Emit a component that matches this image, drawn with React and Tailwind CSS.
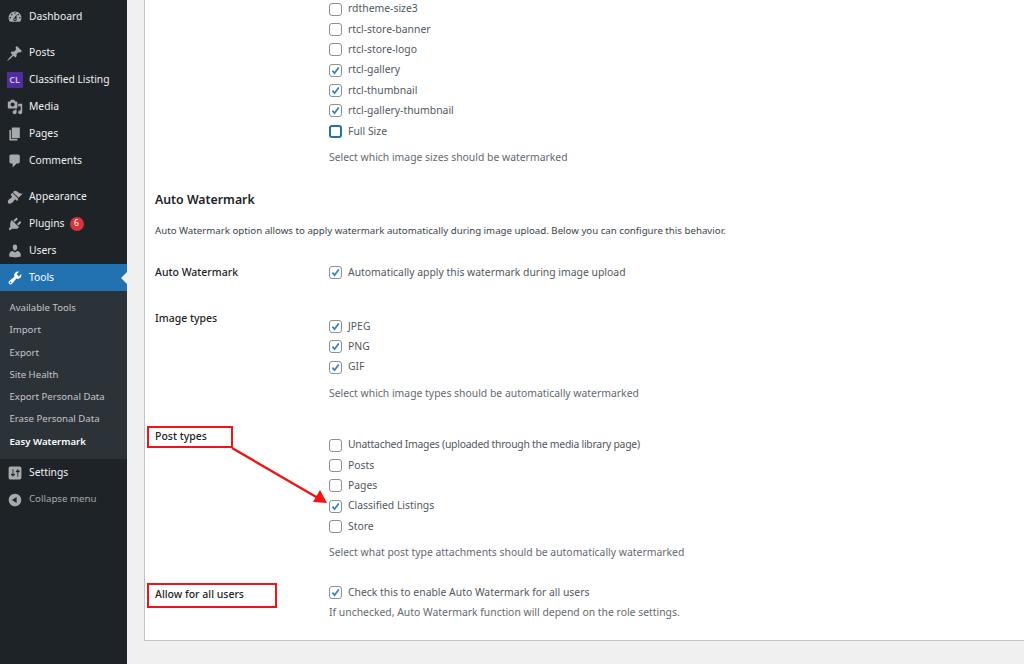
import React from 'react';

// dashicons, redrawn inline since the icon packages do not carry them
const ICONS = {
    dashboard: 'M3.76 16h12.48c1.1-1.37 1.76-3.11 1.76-5 0-4.42-3.58-8-8-8s-8 3.58-8 8c0 1.89.66 3.63 1.76 5zM10 4c.55 0 1 .45 1 1s-.45 1-1 1-1-.45-1-1 .45-1 1-1zM6 6c.55 0 1 .45 1 1s-.45 1-1 1-1-.45-1-1 .45-1 1-1zm8 0c.55 0 1 .45 1 1s-.45 1-1 1-1-.45-1-1 .45-1 1-1zm-5.37 5.55L12 7v6c0 1.1-.9 2-2 2s-2-.9-2-2c0-.57.24-1.08.63-1.45zM4 10c.55 0 1 .45 1 1s-.45 1-1 1-1-.45-1-1 .45-1 1-1zm12 0c.55 0 1 .45 1 1s-.45 1-1 1-1-.45-1-1 .45-1 1-1zm-5 3c0-.55-.45-1-1-1s-1 .45-1 1 .45 1 1 1 1-.45 1-1z',
    post: 'M10.44 3.02l1.82-1.82 6.36 6.35-1.83 1.82c-1.05-.68-2.48-.57-3.41.36l-.75.75c-.92.93-1.04 2.35-.35 3.41l-1.83 1.82-2.41-2.41-2.89 2.89c-1.95 1.95-5.3 4.09-5.3 4.09s2.1-3.29 4.08-5.3l2.89-2.89-2.4-2.4 1.82-1.83c1.06.69 2.48.57 3.41-.36l.75-.75c.93-.92 1.04-2.35.36-3.41z',
    media: 'M13 11V4c0-.55-.45-1-1-1h-1.67L9 1H5L3.67 3H2c-.55 0-1 .45-1 1v7c0 .55.45 1 1 1h10c.55 0 1-.45 1-1zM7 4.5c1.38 0 2.5 1.12 2.5 2.5S8.38 9.5 7 9.5 4.5 8.38 4.5 7 5.62 4.5 7 4.5zM14 6h5v10.5c0 1.38-1.12 2.5-2.5 2.5S14 17.88 14 16.5s1.12-2.5 2.5-2.5c.17 0 .34.02.5.05V9h-3V6zm-4 8.05V13h2v3.5c0 1.38-1.12 2.5-2.5 2.5S7 17.88 7 16.5 8.12 14 9.5 14c.17 0 .34.02.5.05z',
    pages: 'M6 15V2h10v13H6zm-1 1h8v2H3V5h2v11z',
    comments: 'M5 2h9c1.1 0 2 .9 2 2v7c0 1.1-.9 2-2 2h-2l-5 5v-5H5c-1.1 0-2-.9-2-2V4c0-1.1.9-2 2-2z',
    appearance: 'M14.48 11.06L7.41 3.99l1.5-1.5c.5-.56 2.3-.47 3.51.32 1.21.8 1.43 1.28 2.91 2.1 1.18.64 2.45 1.26 4.45.85zM13.77 11.77L6.7 4.7 4.93 6.47c-.39.39-.39 1.02 0 1.41l1.06 1.06c.39.39.39 1.03 0 1.42-.6.6-1.43 1.11-2.21 1.69-.35.26-.7.53-1.01.84C1.43 13.71.57 15.74 1.24 17.17c.25.53.46.74.99.99 1.43.67 3.46-.19 4.83-1.53.31-.31.58-.66.84-1.01.58-.78 1.09-1.61 1.69-2.21.39-.39 1.03-.39 1.42 0l1.06 1.06c.39.39 1.02.39 1.41 0z',
    plugins: 'M13.11 4.36L9.87 7.6 8 5.73l3.24-3.24c.35-.34 1.05-.2 1.56.32.52.51.66 1.21.31 1.55zm-8 1.77l.91-1.12 9.01 9.01-1.19.84c-.71.71-2.63 1.16-3.82 1.16H6.14L4.9 17.26c-.59.59-1.54.59-2.12 0-.59-.58-.59-1.53 0-2.12l1.24-1.24v-3.88c0-1.13.4-3.19 1.09-3.89zm7.26 3.97l3.24-3.24c.34-.35 1.04-.21 1.55.31.52.51.66 1.21.31 1.55l-3.24 3.25z',
    users: 'M10 9.25c-2.27 0-2.73-3.44-2.73-3.44C7 4.02 7.82 2 9.97 2c2.16 0 2.98 2.02 2.71 3.81 0 0-.41 3.44-2.68 3.44zm0 2.57L12.72 10c2.39 0 4.52 2.33 4.52 4.53v2.49s-3.65 1.13-7.24 1.13c-3.65 0-7.24-1.13-7.24-1.13v-2.49c0-2.25 1.94-4.48 4.47-4.48z',
    tools: 'M16.68 9.77c-1.34 1.34-3.3 1.67-4.95.99l-5.41 6.52c-.99.99-2.59.99-3.58 0s-.99-2.59 0-3.57l6.52-5.42c-.68-1.65-.35-3.61.99-4.95 1.28-1.28 3.12-1.62 4.72-1.06l-2.89 2.89 2.82 2.82 2.86-2.87c.53 1.58.18 3.39-1.08 4.65zM3.81 16.21c.4.39 1.04.39 1.43 0 .4-.4.4-1.04 0-1.43-.39-.4-1.03-.4-1.43 0-.39.39-.39 1.03 0 1.43z',
    settings: 'M18 16V4c0-1.1-.9-2-2-2H4c-1.1 0-2 .9-2 2v12c0 1.1.9 2 2 2h12c1.1 0 2-.9 2-2zM8 11h1c.55 0 1 .45 1 1s-.45 1-1 1H8v1.5c0 .28-.22.5-.5.5s-.5-.22-.5-.5V13H6c-.55 0-1-.45-1-1s.45-1 1-1h1V5.5c0-.28.22-.5.5-.5s.5.22.5.5V11zm5-2h-1c-.55 0-1-.45-1-1s.45-1 1-1h1V5.5c0-.28.22-.5.5-.5s.5.22.5.5V7h1c.55 0 1 .45 1 1s-.45 1-1 1h-1v5.5c0 .28-.22.5-.5.5s-.5-.22-.5-.5V9z',
    collapse: 'M10 2.16c4.33 0 7.84 3.51 7.84 7.84s-3.51 7.84-7.84 7.84S2.16 14.33 2.16 10 5.71 2.16 10 2.16zm2 11.72V6.12L6.18 9.97z',
};

const Dashicon = ({ name }) => (
    <svg viewBox="0 0 20 20" className="w-[16px] h-[16px]" fill="currentColor" fillRule="evenodd">
        <path d={ICONS[name]} />
    </svg>
);

const MenuItem = ({ icon, label, mt = '', active = false, badge }) => (
    <div className={`relative flex items-center h-[27px] ${mt} ${active ? 'bg-[#2271b1] text-white' : 'text-[#f0f0f1]'}`}>
        <span className={`w-[29px] flex justify-center shrink-0 ${active ? 'text-white' : 'text-[#a7aaad]'}`}>
            <Dashicon name={icon} />
        </span>
        <span className="text-[10.3px]">{label}</span>
        {badge && (
            <span className="ml-[5px] w-[14px] h-[14px] rounded-full bg-[#d63638] text-white text-[8.5px] flex items-center justify-center">{badge}</span>
        )}
        {active && (
            <span className="absolute right-0 top-1/2 -translate-y-1/2 border-y-[6px] border-y-transparent border-r-[6px] border-r-[#f0f0f1]"></span>
        )}
    </div>
);

const SubItem = ({ label, current = false }) => (
    <div className={`h-[22.3px] flex items-center pl-[9.5px] text-[9.6px] ${current ? 'font-semibold text-white' : 'text-[#c3c4c7]'}`}>{label}</div>
);

const Sidebar = () => (
    <aside className="w-[127px] shrink-0 bg-[#1d2327] pt-[3px]">
        <MenuItem icon="dashboard" label="Dashboard" />
        <MenuItem mt="mt-[9px]" icon="post" label="Posts" />
        <div className="flex items-center h-[27px] text-[#f0f0f1]">
            <span className="w-[29px] flex justify-center shrink-0">
                <span className="w-[16px] h-[16px] bg-[#4f2d9e] text-[#c9c3ee] text-[9px] font-semibold flex items-center justify-center">CL</span>
            </span>
            <span className="text-[10.3px]">Classified Listing</span>
        </div>
        <MenuItem icon="media" label="Media" />
        <MenuItem icon="pages" label="Pages" />
        <MenuItem icon="comments" label="Comments" />
        <MenuItem mt="mt-[9px]" icon="appearance" label="Appearance" />
        <MenuItem icon="plugins" label="Plugins" badge="6" />
        <MenuItem icon="users" label="Users" />
        <MenuItem active icon="tools" label="Tools" />
        <div className="bg-[#2c3338] pt-[6px] pb-[6px]">
            <SubItem label="Available Tools" />
            <SubItem label="Import" />
            <SubItem label="Export" />
            <SubItem label="Site Health" />
            <SubItem label="Export Personal Data" />
            <SubItem label="Erase Personal Data" />
            <SubItem label="Easy Watermark" current />
        </div>
        <MenuItem icon="settings" label="Settings" />
        <div className="flex items-center h-[27px] text-[#a7aaad]">
            <span className="w-[29px] flex justify-center shrink-0"><Dashicon name="collapse" /></span>
            <span className="text-[9.7px]">Collapse menu</span>
        </div>
    </aside>
);

const Check = ({ checked, focus }) => (
    <span className={`w-[13px] h-[13px] shrink-0 rounded-[3px] bg-white flex items-center justify-center ${focus ? 'border-2 border-[#2271b1]' : 'border border-[#8c8f94]'}`}>
        {checked && (
            <svg viewBox="0 0 12 12" className="w-[11px] h-[11px]">
                <path d="M2.6 6.2 5 8.8 9.6 2.8" fill="none" stroke="#3582c4" strokeWidth="1.9" />
            </svg>
        )}
    </span>
);

const CheckRow = ({ label, checked, focus, tight }) => (
    <div className="flex items-center gap-[6px] h-[16px] text-[10.4px] text-[#50575e]">
        <Check checked={checked} focus={focus} />
        <span className={tight ? 'tracking-[-0.25px]' : ''}>{label}</span>
    </div>
);

const CheckList = ({ items }) => (
    <div className="flex flex-col gap-[4.4px]">
        {items.map(item => <CheckRow key={item.label} {...item} />)}
    </div>
);

const Note = ({ children, mt }) => (
    <p className={`text-[10.4px] leading-[16px] text-[#646970] ${mt}`}>{children}</p>
);

const Row = ({ label, labelMt = '', mt, children }) => (
    <div className={`grid grid-cols-[174px_1fr] ${mt}`}>
        <div className={`text-[10.5px] leading-[16px] font-medium text-[#1d2327] ${labelMt}`}>{label}</div>
        <div>{children}</div>
    </div>
);

export default function App() {
    return (
        <div className="relative flex h-[664px] w-[1024px] overflow-hidden bg-[#f0f0f1]" style={{ fontFamily: '"Noto Sans", sans-serif' }}>
            <Sidebar />
            <main className="flex-1 pl-[17px]">
                <div className="h-[641px] bg-white border-l border-b border-[#c3c4c7] pl-[10px] pt-[1px]">
                    <div className="pl-[174px]">
                        <CheckList items={[
                            { label: 'rdtheme-size3' },
                            { label: 'rtcl-store-banner' },
                            { label: 'rtcl-store-logo' },
                            { label: 'rtcl-gallery', checked: true },
                            { label: 'rtcl-thumbnail', checked: true },
                            { label: 'rtcl-gallery-thumbnail', checked: true },
                            { label: 'Full Size', focus: true },
                        ]} />
                        <Note mt="mt-[10px]">Select which image sizes should be watermarked</Note>
                    </div>

                    <h2 className="mt-[26px] text-[12.3px] leading-[18px] font-semibold text-[#1d2327]">Auto Watermark</h2>
                    <p className="mt-[14px] text-[9.7px] leading-[16px] text-[#3c434a]">
                        Auto Watermark option allows to apply watermark automatically during image upload. Below you can configure this behavior.
                    </p>

                    <Row label="Auto Watermark" mt="mt-[25px]">
                        <CheckRow label="Automatically apply this watermark during image upload" checked />
                    </Row>

                    <Row label="Image types" mt="mt-[30px]">
                        <div className="pt-[8px]">
                            <CheckList items={[
                                { label: 'JPEG', checked: true },
                                { label: 'PNG', checked: true },
                                { label: 'GIF', checked: true },
                            ]} />
                            <Note mt="mt-[10px]">Select which image types should be automatically watermarked</Note>
                        </div>
                    </Row>

                    <Row label="Post types" mt="mt-[27px]">
                        <div className="pt-[9px]">
                            <CheckList items={[
                                { label: 'Unattached Images (uploaded through the media library page)', tight: true },
                                { label: 'Posts' },
                                { label: 'Pages' },
                                { label: 'Classified Listings', checked: true },
                                { label: 'Store' },
                            ]} />
                            <Note mt="mt-[9px]">Select what post type attachments should be automatically watermarked</Note>
                        </div>
                    </Row>

                    <Row label="Allow for all users" labelMt="mt-[1px]" mt="mt-[25px]">
                        <CheckRow label="Check this to enable Auto Watermark for all users" checked />
                        <Note mt="mt-[3px]">If unchecked, Auto Watermark function will depend on the role settings.</Note>
                    </Row>
                </div>
            </main>

            {/* red annotations drawn over the screenshot */}
            <div className="absolute left-[147px] top-[426px] w-[86px] h-[22px] border-2 border-[#f01414]"></div>
            <div className="absolute left-[147px] top-[583px] w-[130px] h-[25px] border-2 border-[#f01414]"></div>
            <svg className="absolute left-0 top-0 w-[1024px] h-[664px] pointer-events-none" viewBox="0 0 1024 664">
                <path d="M232 448 L318 498" stroke="#f01414" strokeWidth="2.4" fill="none" />
                <path d="M327 503 L313 502 L320 490 Z" fill="#f01414" />
            </svg>
        </div>
    );
}
